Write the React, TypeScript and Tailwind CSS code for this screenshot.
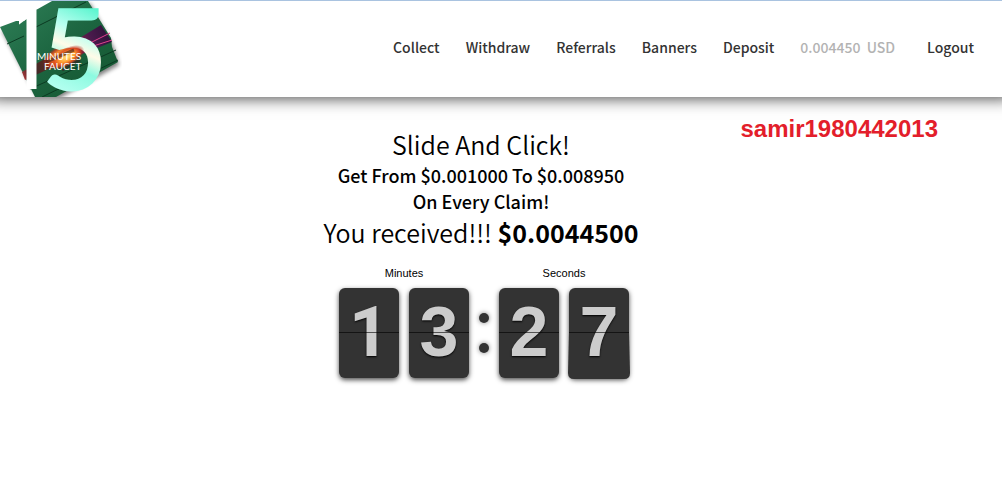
import React from "react";

const links = ["Collect", "Withdraw", "Referrals", "Banners", "Deposit"];

function Logo() {
  return (
    <svg width="122" height="96" viewBox="0 1 122 96" className="block" role="img" aria-label="15 Minutes Faucet">
      <defs>
        <linearGradient id="green" x1="0" y1="0" x2="1" y2="1">
          <stop offset="0" stopColor="#2f8058" />
          <stop offset="0.5" stopColor="#1c6540" />
          <stop offset="1" stopColor="#14552f" />
        </linearGradient>
        <linearGradient id="band" gradientUnits="userSpaceOnUse" x1="20" y1="76" x2="112" y2="35">
          <stop offset="0" stopColor="#c2383a" />
          <stop offset="0.12" stopColor="#3a2a2c" />
          <stop offset="0.3" stopColor="#5a2a20" />
          <stop offset="0.65" stopColor="#7a2040" />
          <stop offset="0.8" stopColor="#4a1a4c" />
          <stop offset="1" stopColor="#2c1238" />
        </linearGradient>
        <radialGradient id="flare">
          <stop offset="0" stopColor="#ffe680" />
          <stop offset="0.45" stopColor="#ff9a30" />
          <stop offset="0.75" stopColor="#d8401c" stopOpacity="0.8" />
          <stop offset="1" stopColor="#a02020" stopOpacity="0" />
        </radialGradient>
        <linearGradient id="five" gradientUnits="userSpaceOnUse" x1="95" y1="10" x2="60" y2="90">
          <stop offset="0" stopColor="#5ff5d0" />
          <stop offset="0.3" stopColor="#b8fff0" />
          <stop offset="0.5" stopColor="#fffbe8" />
          <stop offset="0.7" stopColor="#8cfae0" />
          <stop offset="1" stopColor="#b4fff0" />
        </linearGradient>
        <clipPath id="stem">
          <rect x="19" y="0" width="24" height="97" />
        </clipPath>
        <filter id="soft" x="-20%" y="-20%" width="140%" height="140%">
          <feGaussianBlur stdDeviation="2" />
        </filter>
      </defs>
      <path d="M2 31 L90 3 L114 48 L119 65 L58 99 L38 99 Z" fill="#000" opacity="0.5" filter="url(#soft)" />
      <path d="M0 27 L16 21 L24 21 L36 10 L52 1 L88 1 L111 38 L112 47 L118 62 L56 97 L35 97 Z" fill="url(#green)" />
      <path d="M22 72 L60 50 L101 25 L112 42 L72 58 L25 80 Z" fill="url(#band)" />
      <path d="M84 46 L110 33 M84 49 L112 40" stroke="#e0408c" strokeWidth="1" fill="none" />
      <path d="M7 44 L24 36 M36 27 L86 2 M30 89 L116 50 M42 97 L118 60" stroke="#0b3a22" strokeWidth="1" fill="none" />
      <ellipse cx="62" cy="56" rx="21" ry="11" fill="url(#flare)" transform="rotate(-28 62 56)" />
      <g clipPath="url(#stem)">
        <text x="2" y="89" fontFamily="Inter, sans-serif" fontSize="108" fill="#fff">1</text>
      </g>
      <text x="43" y="89" fontFamily="Lato, sans-serif" fontSize="110" fill="url(#five)" stroke="url(#five)" strokeWidth="3">5</text>
      <ellipse cx="67" cy="57" rx="19" ry="9" fill="url(#flare)" transform="rotate(-28 67 57)" />
      <path d="M46 62 L74 50 M62 70 L80 60" stroke="#3a1c1c" strokeWidth="3" opacity="0.6" />
      <text x="37" y="60" fontFamily="Lato, sans-serif" fontSize="10" fill="#fff">MINUTES</text>
      <text x="44" y="70" fontFamily="Lato, sans-serif" fontSize="10" fill="#fff">FAUCET</text>
    </svg>
  );
}

function Digit({ value, flipping = false }: { value: string; flipping?: boolean }) {
  return (
    <div className="relative flex h-[90px] w-[60px] items-start justify-center rounded-md bg-[#333] text-[70px] leading-[88px] font-bold text-[#ccc] shadow-[0_2px_5px_rgba(0,0,0,0.7)] [text-shadow:0_1px_2px_#000]">
      {flipping && (
        <svg className="absolute top-[45px] -left-px" width="62" height="46" viewBox="0 0 62 46" aria-hidden="true">
          <path d="M1 0 H61 L62 40 Q62 46 56 46 H6 Q0 46 0 40 Z" fill="#333" />
        </svg>
      )}
      <span className="relative font-['Liberation_Sans',Arial,sans-serif]">
        {value === "1" ? <span className="font-['Roboto',sans-serif] leading-none">{value}</span> : value}
      </span>
      <span className="absolute inset-x-0 top-11 h-px bg-black/60" />
    </div>
  );
}

function Group({ label, digits, last = false }: { label: string; digits: string[]; last?: boolean }) {
  return (
    <div className="flex flex-col items-center">
      <span className="font-['Liberation_Sans',Arial,sans-serif] text-[11px] leading-[30px]">{label}</span>
      <div className="flex gap-[10px]">
        <Digit value={digits[0]} />
        <Digit value={digits[1]} flipping={last} />
      </div>
    </div>
  );
}

export default function App() {
  return (
    <div className="min-h-screen overflow-hidden bg-white font-['Noto_Sans_CJK_JP','Open_Sans',sans-serif] text-black">
      <header className="flex items-start justify-between border-t border-[#a9c3e0] bg-white shadow-[0_-9px_15px_10px_rgba(0,0,0,0.75)]">
        <a href="#home"><Logo /></a>
        <nav className="flex gap-[26px] pt-[34px] pr-7 text-[14px] leading-6 font-medium whitespace-nowrap text-[#333]">
          {links.map((l) => (
            <a key={l} href={`#${l.toLowerCase()}`}>{l}</a>
          ))}
          <span className="mr-[6px] whitespace-pre text-[#b3b3b3]">0.004450  USD</span>
          <a href="#logout">Logout</a>
        </nav>
      </header>
      <main className="relative pt-[31px] pr-10 text-center">
        <p className="absolute top-4 right-16 font-['Liberation_Sans',Arial,sans-serif] text-2xl font-bold text-[#e31e2b]">samir1980442013</p>
        <h1 className="mb-[2px] text-[25px] leading-8 font-[350]">Slide And Click!</h1>
        <p className="text-lg leading-[26px] font-medium">Get From $0.001000 To $0.008950<br />On Every Claim!</p>
        <p className="text-[25px] leading-9 font-[350]">You received!!! <strong className="font-bold">$0.0044500</strong></p>
        <div className="mt-2 ml-[6px] flex justify-center gap-[10px]">
          <Group label="Minutes" digits={["1", "3"]} />
          <div className="flex w-[10px] flex-col gap-5 pt-[55px]">
            <span className="size-[10px] rounded-full bg-[#333] shadow-[0_0_5px_rgba(0,0,0,0.5)]" />
            <span className="size-[10px] rounded-full bg-[#333] shadow-[0_0_5px_rgba(0,0,0,0.5)]" />
          </div>
          <Group label="Seconds" digits={["2", "7"]} last />
        </div>
      </main>
    </div>
  );
}
